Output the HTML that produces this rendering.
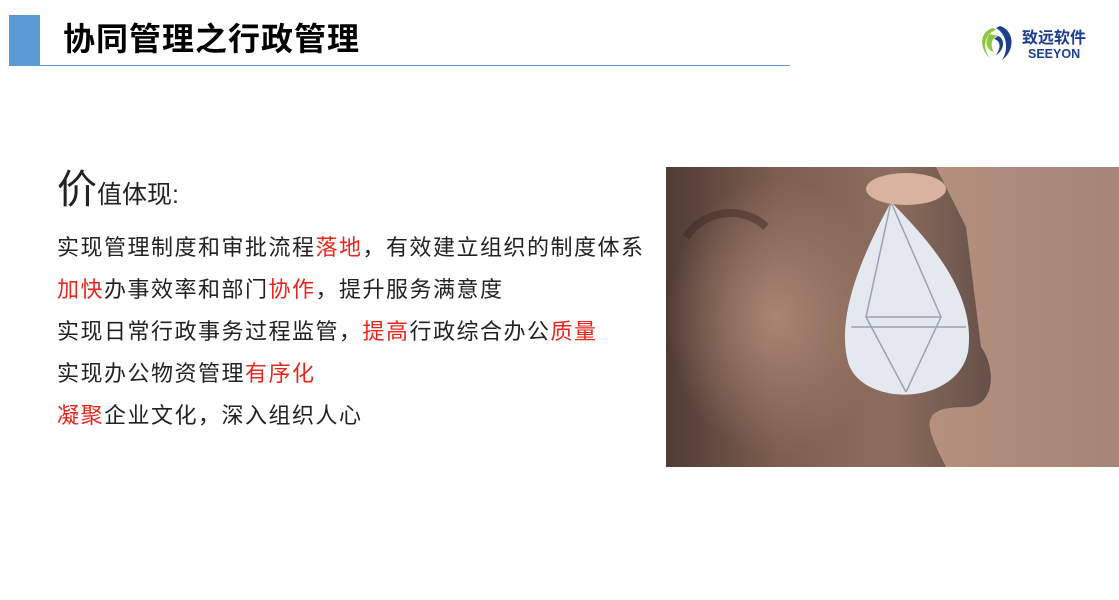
<!DOCTYPE html>
<html><head><meta charset="utf-8"><style>
body{margin:0;width:1119px;height:600px;background:#fff;position:relative;overflow:hidden;font-family:"Liberation Sans","Noto Sans CJK SC",sans-serif}
.bar{position:absolute;left:9px;top:15px;width:31px;height:51px;background:#5b9bd5}
.line{position:absolute;left:9px;top:65px;width:781px;height:1px;background:#5b9bd5}
.title{position:absolute;left:63px;top:19px;font-size:32px;font-weight:bold;color:#000;line-height:40px;letter-spacing:1px}
.t{position:absolute;left:57px;font-size:22px;letter-spacing:1.5px;color:#222;line-height:28px;white-space:nowrap}
.r{color:#e8261d}
.img{position:absolute;left:666px;top:167px;width:453px;height:300px;overflow:hidden;
background:radial-gradient(ellipse 110px 140px at 110px 150px,#a98472,transparent),linear-gradient(90deg,#4e3c35 0%,#7d5e50 25%,#8d6d5e 50%,#5e4c45 75%,#3e3634 100%)}
</style></head><body>
<div class="bar"></div><div class="line"></div>
<div class="title">协同管理之行政管理</div>
<svg style="position:absolute;left:978px;top:24px" width="115" height="40" viewBox="0 0 115 40">
<path d="M16 4 C2 6 0 24 12 34 C4 24 6 10 18 6Z" fill="#8dc63f"/>
<path d="M12 10 C6 16 8 26 16 28 C12 22 13 14 20 12Z" fill="#8dc63f"/>
<path d="M22 2 C36 6 38 26 24 36 C31 26 29 10 18 4Z" fill="#1d3f8f"/>
<path d="M20 12 C27 14 27 26 18 31 C23 24 23 17 16 15Z" fill="#1d3f8f"/>
<text x="44" y="19" font-size="16" font-weight="bold" fill="#1d3f8f" font-family="Noto Sans CJK SC,sans-serif">致远软件</text>
<text x="50" y="34" font-size="12.5" font-weight="bold" fill="#1d3f8f" font-family="Liberation Sans,sans-serif">SEEYON</text>
</svg>
<div class="t" style="top:176px;letter-spacing:0"><span style="font-size:40px">价</span><span style="font-size:25px">值体现:</span></div>
<div class="t" style="top:234px">实现管理制度和审批流程<span class="r">落地</span>，有效建立组织的制度体系</div>
<div class="t" style="top:276px"><span class="r">加快</span>办事效率和部门<span class="r">协作</span>，提升服务满意度</div>
<div class="t" style="top:318px">实现日常行政事务过程监管，<span class="r">提高</span>行政综合办公<span class="r">质量</span></div>
<div class="t" style="top:360px">实现办公物资管理<span class="r">有序化</span></div>
<div class="t" style="top:402px"><span class="r">凝聚</span>企业文化，深入组织人心</div>
<div class="img"><svg width="453" height="300">
<path d="M270 0 L453 0 L453 300 L280 300 C260 260 250 240 300 240 C330 240 330 200 315 180 L300 60 Z" fill="#c8a08c" opacity="0.75"/>
<path d="M225 35 C195 90 170 150 182 195 C195 240 290 240 302 185 C310 130 270 80 225 35Z" fill="#e4e9f0"/>
<path d="M225 35 L200 150 L240 225 M225 35 L275 150 L240 225 M185 160 L300 160 M200 150 L275 150" stroke="#9aa3b3" stroke-width="1.5" fill="none"/>
<ellipse cx="240" cy="22" rx="40" ry="16" fill="#d9b2a0"/>
<path d="M20 70 C40 40 80 40 100 60" stroke="#3a2a24" stroke-width="8" fill="none" opacity="0.5"/>
</svg></div>
</body></html>
